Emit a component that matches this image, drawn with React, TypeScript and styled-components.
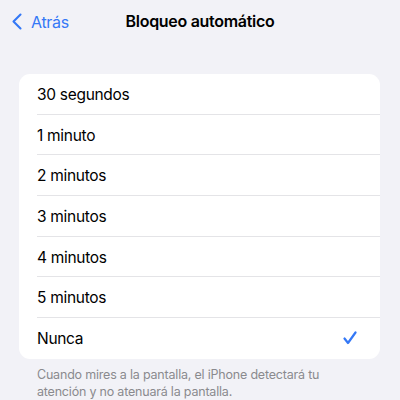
import styled, { createGlobalStyle } from "styled-components";

const GlobalStyle = createGlobalStyle`
  html, body {
    margin: 0;
    padding: 0;
    background: #f2f2f7;
  }
  body {
    font-family: Inter, "Noto Sans", "Liberation Sans", sans-serif;
    -webkit-font-smoothing: antialiased;
  }
`

const Screen = styled.div`
  width: 400px;
  height: 400px;
  overflow: hidden;
  background: #f2f2f7;
`

const NavBar = styled.div`
  position: relative;
  height: 42px;
  display: flex;
  align-items: center;
  justify-content: center;
`

const BackButton = styled.div`
  position: absolute;
  left: 11px;
  top: 13px;
  display: flex;
  align-items: center;
  gap: 8px;
  color: #3478f6;
  font-size: 16px;
  letter-spacing: -0.3px;
  line-height: 16px;
`

const Title = styled.h1`
  margin: 0;
  font-size: 16px;
  font-weight: 600;
  letter-spacing: -0.3px;
  color: #000;
`

const Group = styled.div`
  margin: 32px 20px 0 19px;
  background: #fff;
  border-radius: 11px;
  overflow: hidden;
`

const Row = styled.div<{ $last?: boolean }>`
  height: 40.7px;
  display: flex;
  align-items: center;
  justify-content: space-between;
  padding: 0 23px 0 18px;
  position: relative;
  font-size: 15.5px;
  letter-spacing: -0.3px;
  color: #000;

  &::after {
    content: '';
    display: ${p => (p.$last ? 'none' : 'block')};
    position: absolute;
    left: 18px;
    right: 0;
    bottom: 0;
    height: 1px;
    background: #e4e4e7;
  }
`

const Footer = styled.p`
  margin: 7px 60px 0 37px;
  font-size: 12.5px;
  line-height: 17px;
  color: #8a8a8e;
  letter-spacing: -0.2px;
`

const options = ['30 segundos', '1 minuto', '2 minutos', '3 minutos', '4 minutos', '5 minutos', 'Nunca']
const selected = 'Nunca'

export default function App() {
  return (
    <Screen>
      <GlobalStyle />
      <NavBar>
        <BackButton>
          <svg width="12" height="17" viewBox="0 0 12 17">
            <path d="M9.5 1.5 L2.5 8.5 L9.5 15.5" fill="none" stroke="#3478f6" strokeWidth="2.1" strokeLinecap="round" strokeLinejoin="round" />
          </svg>
          Atrás
        </BackButton>
        <Title>Bloqueo automático</Title>
      </NavBar>
      <Group>
        {options.map((o, i) => (
          <Row key={o} $last={i === options.length - 1}>
            {o}
            {o === selected && (
              <svg width="14" height="14" viewBox="0 0 14 14">
                <path d="M1.5 7.5 L5 12 L12.5 1.5" fill="none" stroke="#3478f6" strokeWidth="2.2" strokeLinecap="round" strokeLinejoin="round" />
              </svg>
            )}
          </Row>
        ))}
      </Group>
      <Footer>
        Cuando mires a la pantalla, el iPhone detectará tu atención y no atenuará la pantalla.
      </Footer>
    </Screen>
  )
}
